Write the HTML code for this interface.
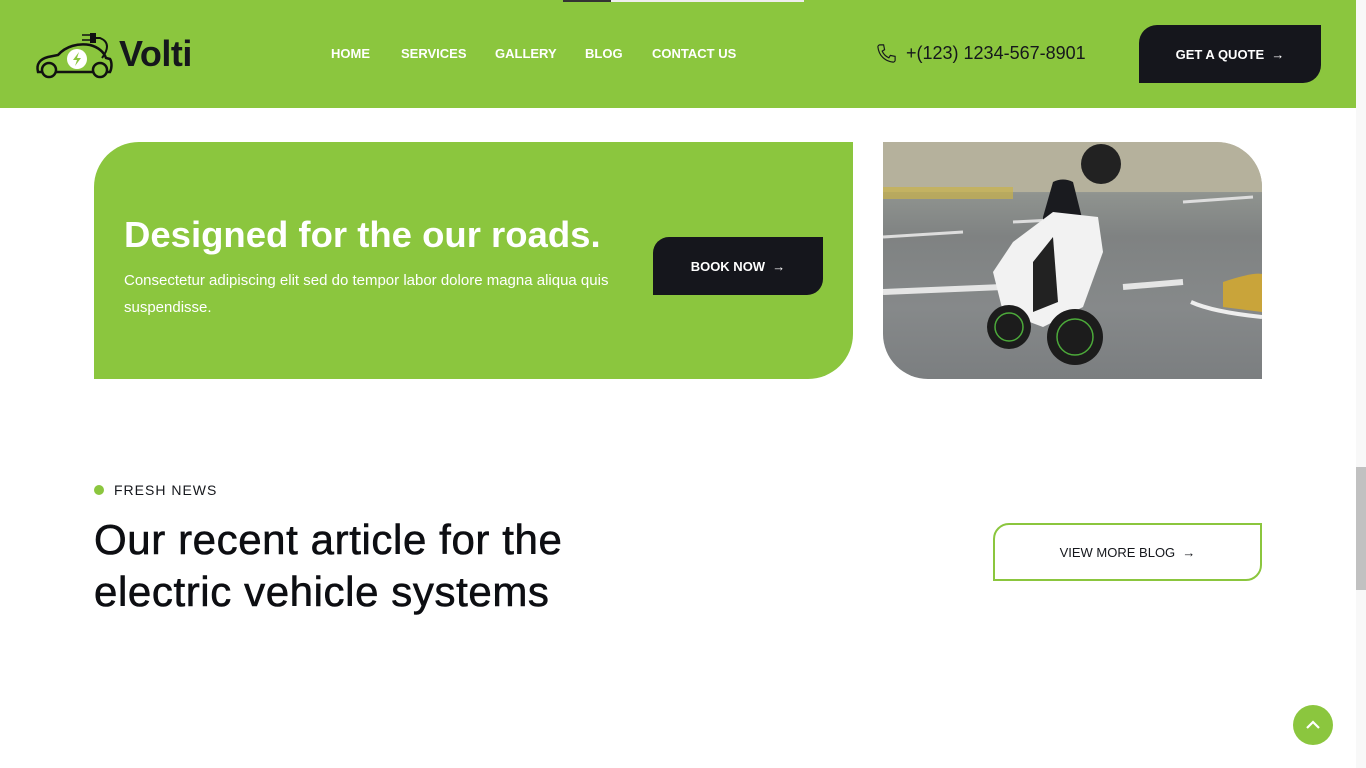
<!DOCTYPE html>
<html><head><meta charset="utf-8"><style>
*{margin:0;padding:0;box-sizing:border-box}
body{width:1366px;height:768px;overflow:hidden;background:#fff;font-family:"Liberation Sans",sans-serif;position:relative}
.hdr{position:absolute;left:0;top:0;width:1356px;height:108px;background:#8bc63e}
.topbar{position:absolute;left:563px;top:0;width:241px;height:2px;background:#eee}
.topbar i{position:absolute;left:0;top:0;width:48px;height:2px;background:#333}
.logo{position:absolute;left:34px;top:28px}
.logotxt{position:absolute;left:119px;top:33px;font-size:36px;font-weight:bold;color:#15171c;letter-spacing:-0.5px}
.nav{position:absolute;top:46px;left:331px;color:#fff;font-weight:bold;font-size:13px}
.nav span{position:absolute;white-space:nowrap}
.phone{position:absolute;left:875px;top:42px;font-size:18px;color:#15171c;display:flex;align-items:center;gap:8px}
.quote{position:absolute;left:1139px;top:25px;width:182px;height:58px;background:#15161c;border-radius:18px 0 18px 0;color:#fff;font-size:13px;font-weight:bold;display:flex;align-items:center;justify-content:center}
.card{position:absolute;left:94px;top:142px;width:759px;height:237px;background:#8bc63e;border-radius:45px 0 45px 0}
.card h2{position:absolute;left:30px;top:72px;color:#fff;font-size:36.5px;font-weight:bold;white-space:nowrap}
.card p{position:absolute;left:30px;top:125px;color:#fff;font-size:15px;line-height:27px;width:492px}
.book{position:absolute;left:559px;top:95px;width:170px;height:58px;background:#15161c;border-radius:16px 0 16px 0;color:#fff;font-size:13px;font-weight:bold;display:flex;align-items:center;justify-content:center}
.img{position:absolute;left:883px;top:142px;width:379px;height:237px;border-radius:0 45px 0 45px;overflow:hidden;background:linear-gradient(180deg,#c9c3b3 0%,#b8b9a8 12%,#8f938f 22%,#7f8282 40%,#86898a 70%,#7b7e80 100%)}
.fresh{position:absolute;left:94px;top:482px;font-size:14px;letter-spacing:1px;color:#15171c;display:flex;align-items:center;gap:10px}
.fresh i{width:10px;height:10px;border-radius:50%;background:#8bc63e;display:inline-block}
.big{position:absolute;left:94px;top:514px;font-size:42px;line-height:52px;color:#0d0e12;letter-spacing:0.6px;width:600px;-webkit-text-stroke:0.6px #0d0e12}
.more{position:absolute;left:993px;top:523px;width:269px;height:58px;border:2px solid #8bc63e;border-radius:16px 0 16px 0;display:flex;align-items:center;justify-content:center;font-size:13px;color:#15171c}
.sb{position:absolute;left:1356px;top:0;width:10px;height:768px;background:#f8f8f8}
.sb i{position:absolute;left:0;top:467px;width:10px;height:123px;background:#c1c1c1}
.up{position:absolute;left:1293px;top:705px;width:40px;height:40px;border-radius:50%;background:#8bc63e}
</style></head><body>
<div class="hdr"></div>
<div class="topbar"><i></i></div>
<svg class="logo" width="82" height="52" viewBox="0 0 82 52">
<path d="M4 44 C2 36 6 31 14 29 L24 27 C32 18 44 15 56 17 C64 19 70 24 72 30 L76 31 C78 34 78 40 76 44 Z" fill="none" stroke="#111" stroke-width="2.5"/>
<path d="M68 30 C74 22 76 14 66 10 L60 10" fill="none" stroke="#111" stroke-width="2"/>
<rect x="56" y="5" width="6" height="10" fill="#111"/><path d="M48 7h8M48 12h8" stroke="#111" stroke-width="1.5"/>
<circle cx="15" cy="42" r="7" fill="#8bc63e" stroke="#111" stroke-width="2.5"/>
<circle cx="66" cy="42" r="7" fill="#8bc63e" stroke="#111" stroke-width="2.5"/>
<circle cx="43" cy="31" r="10" fill="#fff"/>
<path d="M45 24 L39 32 H43 L41 38 L47 30 H43 Z" fill="#8bc63e"/>
</svg>
<div class="logotxt">Volti</div>
<div class="nav"><span style="left:0">HOME</span><span style="left:70px">SERVICES</span><span style="left:164px">GALLERY</span><span style="left:254px">BLOG</span><span style="left:321px">CONTACT US</span></div>
<div class="phone"><svg width="23" height="23" viewBox="0 0 24 24"><path d="M5 3 L9 3 L10 8 L7.5 9.5 C9 13 11 15 14.5 16.5 L16 14 L21 15 L21 19 C21 20 20 21 19 21 C10 20 4 14 3 5 C3 4 4 3 5 3Z" fill="none" stroke="#15171c" stroke-width="1.2"/></svg>+(123) 1234-567-8901</div>
<div class="quote">GET A QUOTE &nbsp;→</div>
<div class="card"><h2>Designed for the our roads.</h2><p>Consectetur adipiscing elit sed do tempor labor dolore magna aliqua quis suspendisse.</p><div class="book">BOOK NOW &nbsp;→</div></div>
<div class="img"><svg width="379" height="237" viewBox="0 0 379 237">
<rect x="0" y="0" width="379" height="50" fill="#b5b19c"/>
<rect x="0" y="45" width="130" height="12" fill="#c9b24a" opacity=".7"/>
<path d="M0 95 L80 90 M130 80 L170 78 M300 60 L370 55" stroke="#ddd" stroke-width="3"/>
<path d="M0 150 L120 145 M240 145 L300 140" stroke="#e5e5e5" stroke-width="6"/>
<path d="M340 140 Q370 130 379 132 L379 170 L340 165Z" fill="#c9a43a"/>
<path d="M308 160 Q330 170 379 175" stroke="#eee" stroke-width="4" fill="none"/>
<path d="M170 40 Q180 35 190 40 L205 100 L190 130 L160 120 L160 75Z" fill="#1a1b1f"/>
<circle cx="218" cy="22" r="20" fill="#222"/>
<path d="M130 100 L170 70 L215 75 L220 110 L200 165 L160 185 L120 170 L110 130Z" fill="#f2f2f2"/>
<path d="M150 120 L170 95 L175 160 L150 170Z" fill="#222"/>
<circle cx="126" cy="185" r="22" fill="#1c1c1c"/><circle cx="126" cy="185" r="14" fill="none" stroke="#4caa3a" stroke-width="1.5"/>
<circle cx="192" cy="195" r="28" fill="#1c1c1c"/><circle cx="192" cy="195" r="18" fill="none" stroke="#4caa3a" stroke-width="1.5"/>
</svg></div>
<div class="fresh"><i></i>FRESH NEWS</div>
<div class="big">Our recent article for the electric vehicle systems</div>
<div class="more">VIEW MORE BLOG &nbsp;→</div>
<div class="sb"><i></i></div>
<div class="up"><svg width="40" height="40" viewBox="0 0 40 40"><path d="M14 23 L20 17 L26 23" fill="none" stroke="#fff" stroke-width="2.2"/></svg></div>
</body></html>
